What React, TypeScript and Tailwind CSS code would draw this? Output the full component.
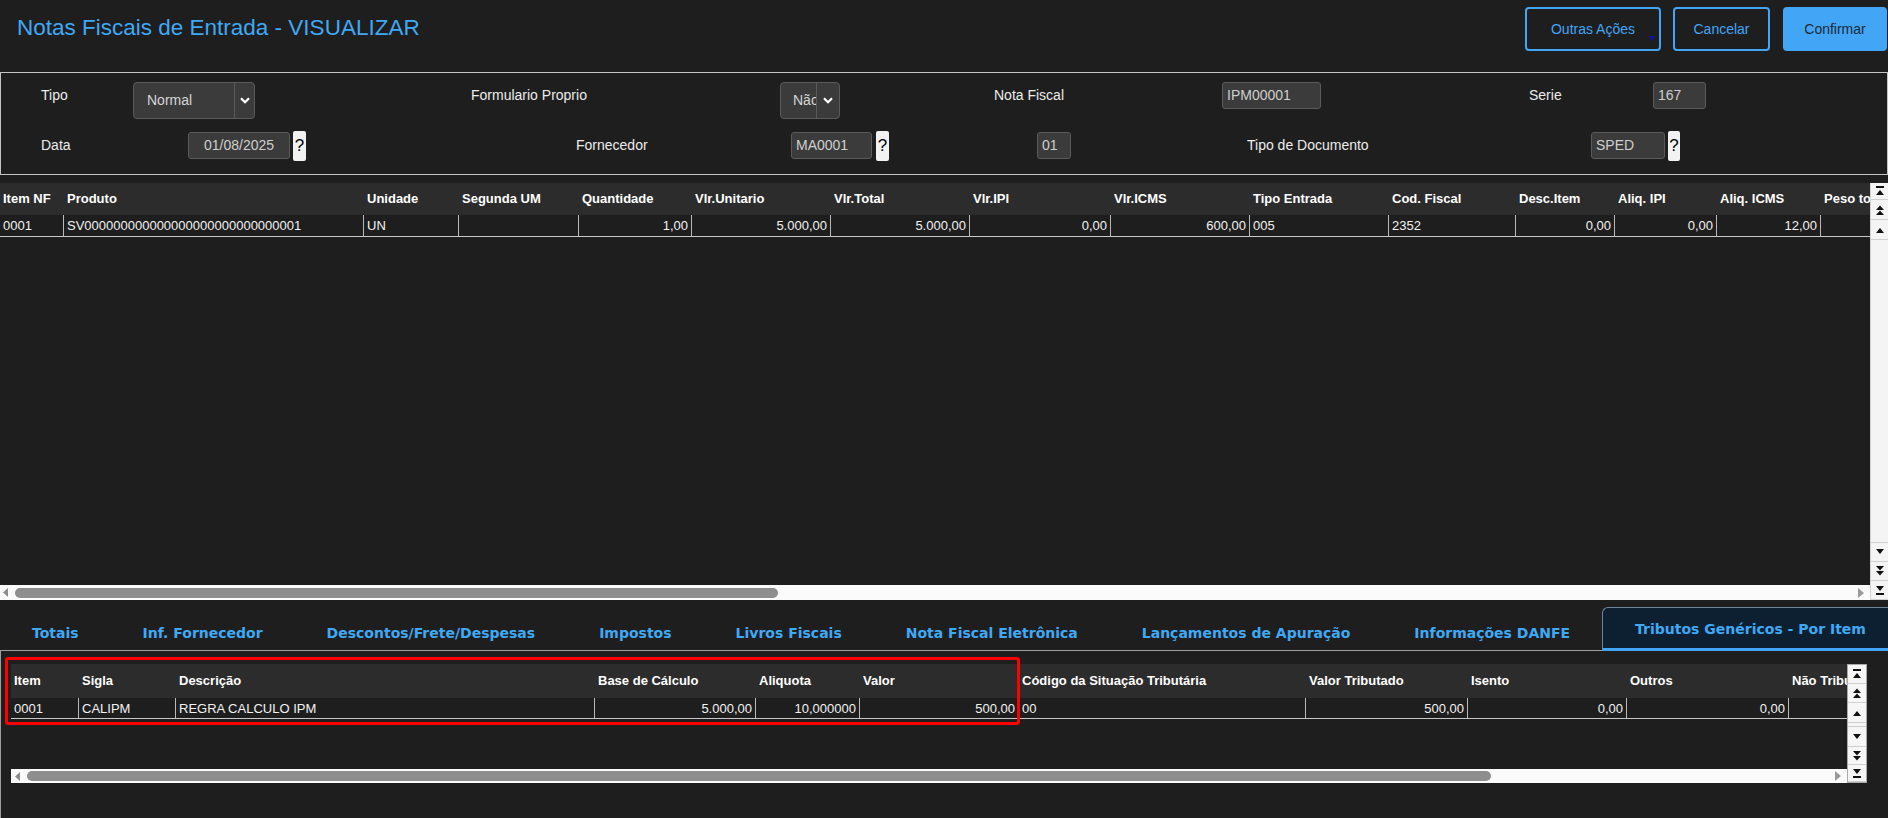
import React from "react";

type Col = { w: string; h: string; v: string; r?: boolean };

const topCols: Col[] = [
  { w: "w-[64px]", h: "Item NF", v: "0001" },
  { w: "w-[300px]", h: "Produto", v: "SV" + "0".repeat(29) + "1" },
  { w: "w-[95px]", h: "Unidade", v: "UN" },
  { w: "w-[120px]", h: "Segunda UM", v: "" },
  { w: "w-[113px]", h: "Quantidade", v: "1,00", r: true },
  { w: "w-[139px]", h: "Vlr.Unitario", v: "5.000,00", r: true },
  { w: "w-[139px]", h: "Vlr.Total", v: "5.000,00", r: true },
  { w: "w-[141px]", h: "Vlr.IPI", v: "0,00", r: true },
  { w: "w-[139px]", h: "Vlr.ICMS", v: "600,00", r: true },
  { w: "w-[139px]", h: "Tipo Entrada", v: "005" },
  { w: "w-[127px]", h: "Cod. Fiscal", v: "2352" },
  { w: "w-[99px]", h: "Desc.Item", v: "0,00", r: true },
  { w: "w-[102px]", h: "Aliq. IPI", v: "0,00", r: true },
  { w: "w-[104px]", h: "Aliq. ICMS", v: "12,00", r: true },
  { w: "w-[120px]", h: "Peso total", v: "" },
];

const bottomCols: Col[] = [
  { w: "w-[68px]", h: "Item", v: "0001" },
  { w: "w-[97px]", h: "Sigla", v: "CALIPM" },
  { w: "w-[419px]", h: "Descrição", v: "REGRA CALCULO IPM" },
  { w: "w-[161px]", h: "Base de Cálculo", v: "5.000,00", r: true },
  { w: "w-[104px]", h: "Aliquota", v: "10,000000", r: true },
  { w: "w-[159px]", h: "Valor", v: "500,00", r: true },
  { w: "w-[287px]", h: "Código da Situação Tributária", v: "00" },
  { w: "w-[162px]", h: "Valor Tributado", v: "500,00", r: true },
  { w: "w-[159px]", h: "Isento", v: "0,00", r: true },
  { w: "w-[162px]", h: "Outros", v: "0,00", r: true },
  { w: "w-[120px]", h: "Não Tributado", v: "" },
];

const tabs = [
  "Totais",
  "Inf. Fornecedor",
  "Descontos/Frete/Despesas",
  "Impostos",
  "Livros Fiscais",
  "Nota Fiscal Eletrônica",
  "Lançamentos de Apuração",
  "Informações DANFE",
];

const label = "text-[14px] leading-[27px] text-[#ececec] whitespace-nowrap";
const input =
  "h-[27px] bg-[#3b3b3b] border border-[#5a5a5a] rounded-[3px] text-[14px] leading-[25px] text-[#cfcfcf] px-[4px] whitespace-nowrap overflow-hidden";

function Help({ w = "w-[13px]", ml }: { w?: string; ml: string }) {
  return (
    <div className={`${ml} ${w} h-[30px] bg-[#f2f2f2] rounded-[2px] text-black text-[17px] leading-[30px] text-center`}>
      ?
    </div>
  );
}

function Chevron() {
  return (
    <svg width="10" height="7" viewBox="0 0 10 7">
      <path d="M1 1.2 L5 5.2 L9 1.2" fill="none" stroke="#fff" strokeWidth="2.2" />
    </svg>
  );
}

function Select({ value, w, arrow, pad }: { value: string; w: string; arrow: string; pad: string }) {
  return (
    <div className={`flex h-[37px] ${w} bg-[#3b3b3b] border border-[#5a5a5a] rounded-[4px] overflow-hidden`}>
      <div className={`flex-1 ${pad} text-[14px] leading-[35px] text-[#d6d6d6] whitespace-nowrap overflow-hidden`}>{value}</div>
      <div className={`${arrow} border-l border-[#5a5a5a] flex items-center justify-center`}>
        <Chevron />
      </div>
    </div>
  );
}

function ScrollIcon({ kind }: { kind: string }) {
  return (
    <svg width="10" height="12" viewBox="0 0 10 12" fill="#111">
      {kind === "first" && (
        <>
          <rect x="1" y="1" width="8" height="2" />
          <polygon points="1,10 5,5 9,10" />
        </>
      )}
      {kind === "dup" && (
        <>
          <polygon points="1,6 5,1.5 9,6" />
          <polygon points="1,11 5,6.5 9,11" />
        </>
      )}
      {kind === "up" && <polygon points="1,9 5,4 9,9" />}
      {kind === "down" && <polygon points="1,3 9,3 5,8" />}
      {kind === "ddown" && (
        <>
          <polygon points="1,1 9,1 5,5.5" />
          <polygon points="1,6 9,6 5,10.5" />
        </>
      )}
      {kind === "last" && (
        <>
          <polygon points="1,2 9,2 5,7" />
          <rect x="1" y="9" width="8" height="2" />
        </>
      )}
    </svg>
  );
}

function SBtn({ kind, h }: { kind: string; h: string }) {
  return (
    <div className={`${h} flex items-center justify-center border-b border-[#cfcfcf]`}>
      <ScrollIcon kind={kind} />
    </div>
  );
}

function HScroll({ h, thumb, arrowPad }: { h: string; thumb: string; arrowPad: string }) {
  return (
    <div className={`${h} bg-[#fbfbfb] flex items-center ${arrowPad} pr-[6px]`}>
      <svg width="5" height="9" viewBox="0 0 5 9">
        <polygon points="5,0 5,9 0,4.5" fill="#8c8c8c" />
      </svg>
      <div className={`ml-[7px] ${thumb} h-[10px] rounded-full bg-[#8e8e8e]`} />
      <div className="flex-1" />
      <svg width="6" height="10" viewBox="0 0 6 10">
        <polygon points="0,0 6,5 0,10" fill="#9a9a9a" />
      </svg>
    </div>
  );
}

function Grid({ cols, headH, rowH }: { cols: Col[]; headH: string; rowH: string }) {
  return (
    <>
      <div className={`flex ${headH} items-center bg-[#2c2c2c]`}>
        {cols.map((c) => (
          <div key={c.h} className={`${c.w} shrink-0 px-[3px] font-bold text-[13px] text-white whitespace-nowrap overflow-hidden`}>
            {c.h}
          </div>
        ))}
      </div>
      <div className={`flex ${rowH} border-b border-[#c8c8c8]`}>
        {cols.map((c) => (
          <div
            key={c.h}
            className={`${c.w} shrink-0 border-r border-[#b9b9b9] px-[3px] text-[13px] leading-[21px] text-[#f2f2f2] whitespace-nowrap overflow-hidden ${c.r ? "text-right" : ""}`}
          >
            {c.v}
          </div>
        ))}
      </div>
    </>
  );
}

export default function App() {
  return (
    <div className="w-[1888px] h-[818px] overflow-hidden bg-[#1e1e1e] font-['Liberation_Sans',Arial,sans-serif] text-[#ededed] flex flex-col">
      {/* title bar */}
      <div className="h-[72px] shrink-0 flex items-start justify-between">
        <h1 className="ml-[17px] mt-[14px] text-[22.5px] leading-[28px] text-[#3fa9f5]">Notas Fiscais de Entrada - VISUALIZAR</h1>
        <div className="flex mt-[7px] mr-[1px]">
          <button className="relative w-[136px] h-[44px] border-2 border-[#42a5f5] rounded-[4px] text-[14px] text-[#42a5f5]">
            Outras Ações
            <svg className="absolute right-[3px] bottom-[8px]" width="8" height="5" viewBox="0 0 8 5">
              <polygon points="0,0 8,0 4,5" fill="#14148c" />
            </svg>
          </button>
          <button className="ml-[12px] w-[97px] h-[44px] border-2 border-[#42a5f5] rounded-[4px] text-[14px] text-[#42a5f5]">
            Cancelar
          </button>
          <button className="ml-[13px] w-[104px] h-[44px] bg-[#42a5f5] rounded-[4px] text-[14px] text-[#1b2a38]">Confirmar</button>
        </div>
      </div>

      {/* form panel */}
      <div className="h-[103px] shrink-0 border border-[#c4c4c4] pt-[9px]">
        <div className="flex items-start">
          <div className={`ml-[40px] w-[92px] ${label}`}>Tipo</div>
          <Select value="Normal" w="w-[122px]" arrow="w-[20px]" pad="pl-[13px]" />
          <div className={`ml-[216px] w-[309px] ${label}`}>Formulario Proprio</div>
          <Select value="Não" w="w-[60px]" arrow="w-[23px]" pad="pl-[12px]" />
          <div className={`ml-[154px] w-[228px] ${label}`}>Nota Fiscal</div>
          <div className={`w-[99px] ${input}`}>IPM00001</div>
          <div className={`ml-[208px] w-[124px] ${label}`}>Serie</div>
          <div className={`w-[53px] ${input}`}>167</div>
        </div>
        <div className="flex items-start mt-[12px]">
          <div className={`ml-[40px] mt-[1px] w-[147px] ${label}`}>Data</div>
          <div className={`mt-[1px] w-[102px] text-center ${input}`}>01/08/2025</div>
          <Help ml="ml-[3px]" />
          <div className={`ml-[270px] mt-[1px] w-[215px] ${label}`}>Fornecedor</div>
          <div className={`mt-[1px] w-[81px] ${input}`}>MA0001</div>
          <Help ml="ml-[4px]" />
          <div className={`ml-[148px] mt-[1px] w-[34px] ${input}`}>01</div>
          <div className={`ml-[176px] mt-[1px] w-[344px] ${label}`}>Tipo de Documento</div>
          <div className={`mt-[1px] w-[74px] ${input}`}>SPED</div>
          <Help ml="ml-[3px]" w="w-[12px]" />
        </div>
      </div>

      {/* items grid */}
      <div className="mt-[8px] h-[417px] shrink-0 flex">
        <div className="w-[1870px] flex flex-col overflow-hidden">
          <Grid cols={topCols} headH="h-[32px]" rowH="h-[22px]" />
          <div className="flex-1" />
          <HScroll h="h-[15px]" thumb="w-[763px]" arrowPad="pl-[3px]" />
        </div>
        <div className="w-[18px] flex flex-col bg-[#f4f4f4] border-l border-[#d4d4d4]">
          <SBtn kind="first" h="h-[17px]" />
          <SBtn kind="dup" h="h-[20px]" />
          <SBtn kind="up" h="h-[20px]" />
          <div className="flex-1 border-b border-[#cfcfcf]" />
          <SBtn kind="down" h="h-[19px]" />
          <SBtn kind="ddown" h="h-[19px]" />
          <SBtn kind="last" h="h-[19px]" />
        </div>
      </div>

      {/* tabs */}
      <div className="mt-[7px] h-[44px] shrink-0 flex items-end border-b border-[#9e9e9e] font-['DejaVu_Sans',Verdana,sans-serif] font-bold text-[14px] text-[#3fa9f5]">
        {tabs.map((t) => (
          <div key={t} className="h-[43px] px-[32px] pt-[18px] leading-[17px] whitespace-nowrap">
            {t}
          </div>
        ))}
        <div className="flex-1 h-[44px] -mb-[1px] pl-[32px] pr-[20px] pt-[13px] leading-[17px] whitespace-nowrap bg-[#0c2031] border-t border-l border-[#6f8596] rounded-tl-[6px] border-b-[3px] border-b-[#42a5f5]">
          Tributos Genéricos - Por Item
        </div>
      </div>

      {/* bottom panel */}
      <div className="relative flex-1 border-l border-[#9e9e9e] pl-[10px] pt-[13px]">
        <div className="flex h-[119px]">
          <div className="w-[1836px] flex flex-col overflow-hidden">
            <Grid cols={bottomCols} headH="h-[34px]" rowH="h-[21px]" />
            <div className="flex-1" />
            <HScroll h="h-[14px]" thumb="w-[1464px]" arrowPad="pl-[4px]" />
          </div>
          <div className="w-[20px] flex flex-col bg-[#f6f6f6] border border-[#a9a9a9]">
            <SBtn kind="first" h="h-[19px]" />
            <SBtn kind="dup" h="h-[19px]" />
            <SBtn kind="up" h="h-[20px]" />
            <div className="flex-1 border-b border-[#cfcfcf]" />
            <SBtn kind="down" h="h-[20px]" />
            <SBtn kind="ddown" h="h-[18px]" />
            <SBtn kind="last" h="h-[17px]" />
          </div>
        </div>
        <div className="absolute left-[4px] top-[6px] w-[1015px] h-[68px] border-[3px] border-[#ff0000] rounded-[3px]" />
      </div>
    </div>
  );
}
